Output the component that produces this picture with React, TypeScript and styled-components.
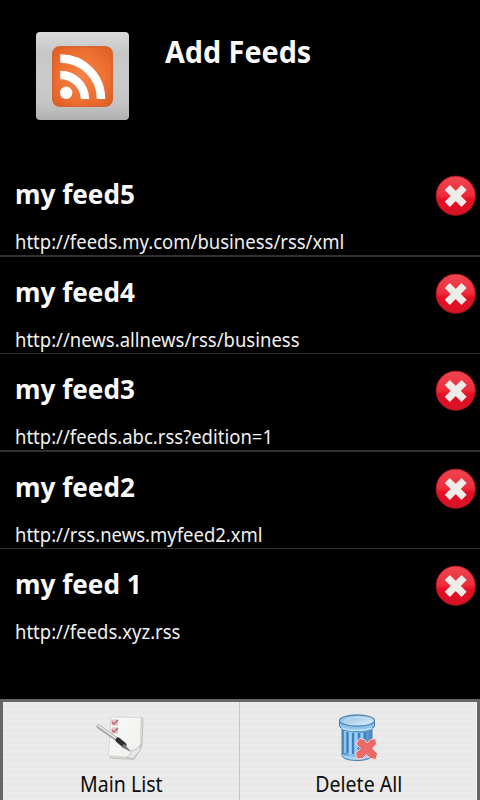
import React from "react";
import styled, { createGlobalStyle } from "styled-components";

const GlobalStyle = createGlobalStyle`
  * { box-sizing: border-box; }
  body { margin: 0; background: #000; overflow: hidden; }
`;

const Screen = styled.main`
  width: 480px;
  height: 800px;
  display: flex;
  flex-direction: column;
  background: #000;
  color: #fafafa;
  font-family: "Noto Sans", "Open Sans", sans-serif;
`;

const Header = styled.header`
  height: 159px;
  display: flex;
  align-items: flex-start;
  gap: 36px;
  padding: 32px 36px 0;
`;

const FeedButton = styled.button`
  width: 93px;
  height: 88px;
  padding: 1px 0 0;
  border: 0;
  border-radius: 4px;
  display: flex;
  align-items: center;
  justify-content: center;
  background: linear-gradient(#dadada 0%, #c6c6c6 24%, #cbcbcb 55%, #c4c4c4 82%, #b0b0b0 100%);
`;

const Text = styled.span<{ $squeeze: number }>`
  display: block;
  white-space: nowrap;
  transform: scaleX(${(p) => p.$squeeze});
  transform-origin: left;
`;

const Heading = styled.h1`
  margin: 0;
  font-size: 30px;
  line-height: 40px;
  font-weight: 700;
`;

const FeedList = styled.ul`
  list-style: none;
  margin: 0;
  padding: 0;
  flex: 1;
`;

const FeedRow = styled.li<{ $height: number; $line: number }>`
  height: ${(p) => p.$height}px;
  border-bottom: ${(p) => p.$line}px solid #303030;
  display: flex;
  justify-content: space-between;
  align-items: flex-start;
  padding: 16px 4px 0 15px;
`;

const FeedInfo = styled.div`
  display: flex;
  flex-direction: column;
  gap: 17px;
  padding-top: 1px;
`;

const FeedTitle = styled.h2`
  margin: 0;
  font-size: 27px;
  line-height: 36px;
  font-weight: 700;
`;

const FeedUrl = styled.p`
  margin: 0;
  font-size: 19px;
  line-height: 26px;
  color: #f0f0f0;
`;

const RemoveButton = styled.button`
  width: 41px;
  height: 41px;
  padding: 0;
  border: 0;
  background: none;
`;

const BottomMenu = styled.nav`
  height: 101px;
  display: grid;
  grid-template-columns: 237px 237px;
  border: 3px solid #666;
  border-bottom: 0;
  background: repeating-linear-gradient(#ebebeb 0 3px, #e8e8e8 3px 6px);
`;

const MenuItem = styled.button`
  border: 0;
  border-right: 1px solid #c4c4c4;
  padding: 11px 0 0;
  background: none;
  display: flex;
  flex-direction: column;
  align-items: center;
  gap: 9px;
  font-family: inherit;
  font-size: 21px;
  line-height: 28px;
  color: #0c0c0c;
  &:last-child {
    border-right-color: #f8f8f8;
    padding-left: 2px;
  }
`;

const CenteredText = styled(Text)`
  transform-origin: center;
`;

const RssIcon = () => (
  <svg width="61" height="61" viewBox="0 0 61 61">
    <defs>
      <radialGradient id="rss" cx=".5" cy=".5" r=".7">
        <stop offset="0" stopColor="#f4854a" />
        <stop offset=".6" stopColor="#ec6f30" />
        <stop offset="1" stopColor="#dc5c22" />
      </radialGradient>
    </defs>
    <rect x=".8" y=".8" width="59.4" height="59.4" rx="7" fill="url(#rss)" stroke="#d8642f" strokeWidth="1.6" />
    <circle cx="14.2" cy="46.8" r="6.2" fill="#fff" />
    <path d="M8.300 29A24.500 24.500 0 0 1 33 53" fill="none" stroke="#fff" strokeWidth="8.400" />
    <path d="M8.300 12.500A40.500 40.500 0 0 1 49 53" fill="none" stroke="#fff" strokeWidth="8.400" />
  </svg>
);

const RemoveIcon = () => (
  <svg width="41" height="41" viewBox="0 0 41 41">
    <defs>
      <linearGradient id="remove" x1="0" y1="0" x2="0" y2="1">
        <stop offset="0" stopColor="#ee4650" />
        <stop offset=".48" stopColor="#ee2d3c" />
        <stop offset=".6" stopColor="#e60d22" />
        <stop offset="1" stopColor="#d51428" />
      </linearGradient>
    </defs>
    <circle cx="20.7" cy="20.7" r="19.6" fill="url(#remove)" stroke="#a91522" strokeWidth="1" />
    <path d="M12.300 12.500 29.100 29.300M29.100 12.500 12.300 29.300" stroke="#efebe9" strokeWidth="7.300" />
  </svg>
);

const ChecklistIcon = () => (
  <svg width="50" height="48" viewBox="0 0 50 48">
    <defs>
      <linearGradient id="paper" x1="0" y1="0" x2="1" y2="1">
        <stop offset="0" stopColor="#fbfbfa" />
        <stop offset="1" stopColor="#eeeeec" />
      </linearGradient>
    </defs>
    <path d="M15 5 47 5 46 33 38 46.500 14 45Z" fill="#d8d8d6" stroke="#c4c4c2" strokeWidth="1" />
    <path d="M15 4 45 4.500 44.500 32 34 44.500 12.500 42.500Z" fill="url(#paper)" stroke="#d3d3d1" strokeWidth=".8" />
    <path d="M30 44.500c4-2 5-4 5-7 4 0 7-2 10-6l-1 6-7 8Z" fill="#e8e8e6" stroke="#b5b5b2" strokeWidth=".8" />
    <path d="M16 7h5.500v5H16zM16 15h5.500v5H16z" fill="#eccdcf" stroke="#d8b5b8" strokeWidth=".9" />
    <path d="m16 9 2 2 4-4M16 17l2 2 4-4" fill="none" stroke="#bc6870" strokeWidth="1.500" />
    <path d="m2.500 13.500 20 14" stroke="#a9a9a9" strokeWidth="4" strokeLinecap="round" />
    <path d="m2.500 12.800 20 14" stroke="#e4e4e4" strokeWidth="1.700" strokeLinecap="round" />
    <path d="m22 27 6 5" stroke="#303030" strokeWidth="5" strokeLinecap="round" />
    <path d="m28 31 6 7-8-4Z" fill="#777" stroke="#777" strokeWidth=".7" />
  </svg>
);

const TrashIcon = () => (
  <svg width="42" height="48" viewBox="0 0 42 48">
    <defs>
      <linearGradient id="bin" x1="0" y1="0" x2="1" y2="0">
        <stop offset="0" stopColor="#4285c2" />
        <stop offset=".3" stopColor="#8fc4ec" />
        <stop offset=".7" stopColor="#68aae0" />
        <stop offset="1" stopColor="#4a83bd" />
      </linearGradient>
      <linearGradient id="lid" x1="0" y1="0" x2="1" y2="1">
        <stop offset="0" stopColor="#82b5de" />
        <stop offset="1" stopColor="#e7f5fe" />
      </linearGradient>
    </defs>
    <path d="M4 13v29c0 3 5 5.500 15 5.500S34 45 34 42V13Z" fill="url(#bin)" stroke="#4b7faa" />
    <path d="M9.500 19v21M15 20v21M21 20v21M27 19v21" stroke="#3a7fbd" strokeWidth="1.900" />
    <path d="M7 18v22M12 19v22M18 20v21M24 20v21" stroke="#b4dcf7" strokeWidth="1.300" />
    <path d="M4.500 41c4 4 25 4 29 0v2c-4 5-25 5-29 0Z" fill="#a9d2f0" />
    <path d="M1.500 8v5c2 7 33 7 35 0V8Z" fill="#8cc3eb" stroke="#4a81b0" />
    <path d="M4 15c5 3 25 3 30 0" fill="none" stroke="#bfe1f7" strokeWidth="1.500" />
    <ellipse cx="19" cy="7.500" rx="17.500" ry="5.700" fill="url(#lid)" stroke="#4a80ad" strokeWidth="1.200" />
    <path d="M7 8.500c2-4 13-5 20-3" fill="none" stroke="#c2e1f5" strokeWidth="1.200" />
    <path d="m21.500 25.500 5 1 2.500 3.500 3.500-3.500 5-1 1 5.500-4 4.500 5 5-1.500 6-6-1-3.500-4-4 4-5.500.5-1.500-6 5-4.500-4.500-4.500Z" fill="#e96a66" stroke="#f7dbd8" strokeWidth="1" strokeLinejoin="round" />
  </svg>
);

const feeds = [
  { title: "my feed5", url: "http://feeds.my.com/business/rss/xml", height: 98, line: 2 },
  { title: "my feed4", url: "http://news.allnews/rss/business", height: 97, line: 1 },
  { title: "my feed3", url: "http://feeds.abc.rss?edition=1", height: 98, line: 2 },
  { title: "my feed2", url: "http://rss.news.myfeed2.xml", height: 97, line: 1 },
  { title: "my feed 1", url: "http://feeds.xyz.rss", height: 98, line: 0 },
];

export default function App() {
  return (
    <>
      <GlobalStyle />
      <Screen>
        <Header>
          <FeedButton aria-label="RSS feed"><RssIcon /></FeedButton>
          <Heading><Text $squeeze={0.957}>Add Feeds</Text></Heading>
        </Header>
        <FeedList>
          {feeds.map((feed) => (
            <FeedRow key={feed.title} $height={feed.height} $line={feed.line}>
              <FeedInfo>
                <FeedTitle><Text $squeeze={0.967}>{feed.title}</Text></FeedTitle>
                <FeedUrl><Text $squeeze={0.973}>{feed.url}</Text></FeedUrl>
              </FeedInfo>
              <RemoveButton aria-label={`Remove ${feed.title}`}><RemoveIcon /></RemoveButton>
            </FeedRow>
          ))}
        </FeedList>
        <BottomMenu>
          <MenuItem><ChecklistIcon /><CenteredText $squeeze={0.93}>Main List</CenteredText></MenuItem>
          <MenuItem><TrashIcon /><CenteredText $squeeze={0.93}>Delete All</CenteredText></MenuItem>
        </BottomMenu>
      </Screen>
    </>
  );
}
